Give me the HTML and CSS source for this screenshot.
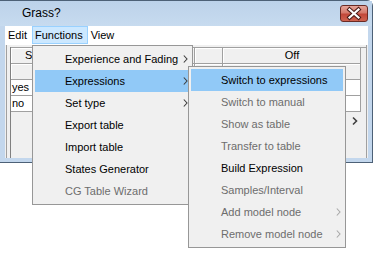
FILE: index.html
```html
<!DOCTYPE html>
<html>
<head>
<meta charset="utf-8">
<link rel="stylesheet" href="styles.css">
</head>
<body>
<div class="window">
  <div class="titlebar">
    <span class="title">Grass?</span>
    <div class="close">
      <svg width="28" height="17" viewBox="0 0 28 17">
        <path d="M9.5 4.5 L18.5 12.5 M18.5 4.5 L9.5 12.5" stroke="#4a1a16" stroke-width="4.2" stroke-linecap="square" fill="none"/>
        <path d="M9.5 4.5 L18.5 12.5 M18.5 4.5 L9.5 12.5" stroke="#ffffff" stroke-width="2.2" stroke-linecap="square" fill="none"/>
      </svg>
    </div>
  </div>
  <div class="menubar">
    <span class="mitem">Edit</span>
    <span class="mitem active">Functions</span>
    <span class="mitem">View</span>
  </div>
  <div class="client">
    <div class="panel">
      <div class="gridwrap">
        <div class="grid">
          <div class="cell head first">Species</div>
          <div class="cell head"></div>
          <div class="cell head"></div>
          <div class="cell head center">Off</div>
          <div class="cell head"></div>
          <div class="cell head"></div>
          <div class="cell head"></div>
          <div class="cell head"></div>
          <div class="cell data">yes</div>
          <div class="cell data"></div>
          <div class="cell data"></div>
          <div class="cell data"></div>
          <div class="cell data">no</div>
          <div class="cell data"></div>
          <div class="cell data"></div>
          <div class="cell data"></div>
        </div>
        <div class="scrollrow">
          <svg class="chev" width="16" height="16" viewBox="0 0 16 16"><path d="M6 4.5 L9.5 8 L6 11.5" stroke="#404040" stroke-width="1.6" fill="none"/></svg>
        </div>
      </div>
    </div>
  </div>
</div>

<div class="menu functions">
  <div class="item">Experience and Fading<svg class="arrow" width="5" height="8" viewBox="0 0 5 8"><path d="M0.8 0.5 L4 4 L0.8 7.5"/></svg></div>
  <div class="item hl">Expressions<svg class="arrow" width="5" height="8" viewBox="0 0 5 8"><path d="M0.8 0.5 L4 4 L0.8 7.5"/></svg></div>
  <div class="item">Set type<svg class="arrow" width="5" height="8" viewBox="0 0 5 8"><path d="M0.8 0.5 L4 4 L0.8 7.5"/></svg></div>
  <div class="item">Export table</div>
  <div class="item">Import table</div>
  <div class="item">States Generator</div>
  <div class="item dis">CG Table Wizard</div>
</div>

<div class="menu submenu">
  <div class="item hl">Switch to expressions</div>
  <div class="item dis">Switch to manual</div>
  <div class="item dis">Show as table</div>
  <div class="item dis">Transfer to table</div>
  <div class="item">Build Expression</div>
  <div class="item dis">Samples/Interval</div>
  <div class="item dis">Add model node<svg class="arrow" width="5" height="8" viewBox="0 0 5 8"><path d="M0.8 0.5 L4 4 L0.8 7.5"/></svg></div>
  <div class="item dis">Remove model node<svg class="arrow" width="5" height="8" viewBox="0 0 5 8"><path d="M0.8 0.5 L4 4 L0.8 7.5"/></svg></div>
</div>
</body>
</html>
```

FILE: styles.css
```css
html, body {
  margin: 0;
  padding: 0;
}
body {
  width: 376px;
  height: 253px;
  overflow: hidden;
  background: #ffffff;
  font-family: "Liberation Sans", Arial, sans-serif;
  font-size: 11px;
  color: #000;
  position: relative;
}
.window {
  width: 373px;
  height: 163px;
  box-sizing: border-box;
  border: 1px solid #4d6177;
  border-left: 0;
  border-radius: 0 6px 0 0;
  background: #c3d7ed;
  padding: 0 4px 4px 5px;
  display: flex;
  flex-direction: column;
}
.titlebar {
  height: 25px;
  flex: none;
  display: flex;
  justify-content: space-between;
  align-items: flex-start;
  background: linear-gradient(#bcd2ea, #c7dbef);
  margin: 0 -4px 0 -5px;
  padding: 0 4px 0 22px;
}
.title {
  font-size: 12px;
  line-height: 24px;
  color: #000;
}
.close {
  width: 28px;
  height: 17px;
  margin-top: 4px;
  box-sizing: border-box;
  border: 1px solid #6a2b25;
  border-radius: 3px;
  background: linear-gradient(#e5a59a 0%, #d57a6c 45%, #c2483a 55%, #cf6350 100%);
  display: flex;
  align-items: center;
  justify-content: center;
}
.close svg {
  display: block;
  margin: -1px;
}
.menubar {
  height: 19px;
  flex: none;
  background: #ffffff;
  display: flex;
  align-items: flex-start;
}
.mitem {
  height: 18px;
  box-sizing: border-box;
  border: 1px solid transparent;
  padding: 0 4px 0 2px;
  line-height: 16px;
}
.mitem.active {
  background: #cce8ff;
  border-color: #99d1ff;
}
.client {
  flex: 1;
  background: #f0f0f0;
  padding: 0 1px;
  display: flex;
}
.panel {
  flex: 1;
  border-left: 1px solid #a0a0a0;
  border-right: 1px solid #a0a0a0;
  padding: 2px 0 0 3px;
  display: flex;
}
.gridwrap {
  flex: 1;
  border-left: 1px solid #808080;
  display: flex;
  flex-direction: column;
}
.grid {
  display: grid;
  grid-template-columns: 84px 100px 28px 138px;
  border-top: 1px solid #a0a0a0;
}
.cell {
  height: 16px;
  box-sizing: border-box;
  border-right: 1px solid #a0a0a0;
  border-bottom: 1px solid #a0a0a0;
  line-height: 15px;
  padding-left: 1px;
  white-space: nowrap;
  overflow: hidden;
}
.cell.head {
  background: #f0f0f0;
  box-shadow: inset 1px 1px #ffffff;
}
.cell.first {
  padding-left: 14px;
}
.cell.center {
  text-align: center;
}
.cell.data {
  background: #ffffff;
}
.scrollrow {
  display: flex;
  justify-content: flex-end;
  padding: 1px 3px 0 0;
}
.chev {
  display: block;
}
.menu {
  position: absolute;
  box-sizing: border-box;
  background: #f0f0f0;
  border: 1px solid #979797;
  padding: 2px;
}
.functions {
  left: 32px;
  top: 45px;
  width: 161px;
}
.submenu {
  left: 188px;
  top: 66px;
  width: 158px;
}
.item {
  height: 22px;
  line-height: 22px;
  padding-left: 30px;
  position: relative;
  white-space: nowrap;
}
.item.hl {
  background: #91c9f7;
}
.item.dis {
  color: #6d6d6d;
}
.arrow {
  position: absolute;
  right: 2px;
  top: 7px;
  display: block;
}
.arrow path {
  fill: none;
  stroke: #3c3c3c;
  stroke-width: 1.1;
}
.item.dis .arrow path {
  stroke: #a8a8a8;
}
```
